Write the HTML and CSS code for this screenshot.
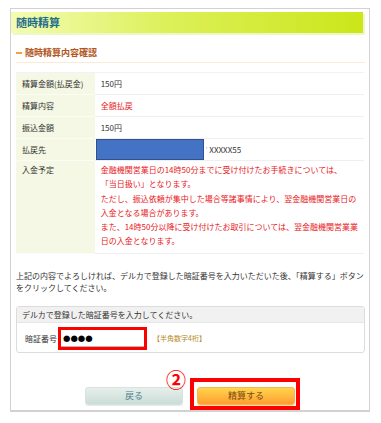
FILE: index.html
```html
<!DOCTYPE html>
<html lang="ja">
<head>
    <meta charset="UTF-8">
    <title>随時精算</title>
    <link rel="stylesheet" href="styles.css">
</head>
<body>
    <div class="panel">
        <h1 class="page-title">随時精算</h1>
        <div class="content">
            <h2 class="section-title">随時精算内容確認</h2>
            <table class="detail">
                <tr>
                    <th>精算金額(払戻金)</th>
                    <td>150円</td>
                </tr>
                <tr>
                    <th>精算内容</th>
                    <td class="red">全額払戻</td>
                </tr>
                <tr>
                    <th>振込金額</th>
                    <td>150円</td>
                </tr>
                <tr>
                    <th>払戻先</th>
                    <td>
                        <div class="dest">
                            <span class="masked"></span>
                            <span class="tick">'</span>
                            <span>XXXXX55</span>
                        </div>
                    </td>
                </tr>
                <tr class="schedule">
                    <th>入金予定</th>
                    <td class="red">
                        金融機関営業日の14時50分までに受け付けたお手続きについては、<br>
                        「当日扱い」となります。<br>
                        ただし、振込依頼が集中した場合等諸事情により、翌金融機関営業日の<br>
                        入金となる場合があります。<br>
                        また、14時50分以降に受け付けたお取引については、翌金融機関営業業<br>
                        日の入金となります。
                    </td>
                </tr>
            </table>

            <p class="note">上記の内容でよろしければ、デルカで登録した暗証番号を入力いただいた後、「精算する」ボタン<br>をクリックしてください。</p>

            <div class="pin-box">
                <div class="pin-head">デルカで登録した暗証番号を入力してください。</div>
                <div class="pin-row">
                    <label class="pin-label" for="pin">暗証番号</label>
                    <div class="pin-input">
                        <input type="text" id="pin" value="●●●●">
                    </div>
                    <span class="pin-hint">【半角数字4桁】</span>
                </div>
            </div>

            <div class="actions">
                <button type="button" class="btn btn-back">戻る</button>
                <div class="submit-wrap">
                    <span class="step">②</span>
                    <button type="submit" class="btn btn-submit">精算する</button>
                </div>
            </div>
        </div>
    </div>
</body>
</html>
```

FILE: styles.css
```css
* { box-sizing: border-box; }
body { margin: 0; padding: 8px 11px 0 10px; font-family: "Noto Sans CJK JP", sans-serif; font-size: 8px; color: #333; background: #fff; }
.panel { width: 360px; height: 404px; border: 1px solid #d2d2d2; border-bottom-width: 2px; }
.page-title { margin: 3px 0 0 0; width: 352px; height: 21px; padding-left: 5px; font-size: 11px; line-height: 21px; font-weight: bold; color: #1f6f8b; background: linear-gradient(to right, #f3fcb4, #dcf058 45%, #cbe61a); box-shadow: 2px 2px 0 #eef8c4; }
.content { padding: 0 4px 0 5px; }
.section-title { margin: 13px 0 0; padding-bottom: 2px; font-size: 9px; line-height: 14px; font-weight: bold; color: #b2571d; border-bottom: 1px solid #f9ebd6; display: flex; align-items: center; }
.section-title::before { content: ""; width: 6px; height: 2px; background: #f2a43a; margin-right: 3px; }
.detail { margin-top: 9px; width: 348px; border-collapse: collapse; border-top: 1px solid #f2f2f2; }
.detail th, .detail td { padding: 0 6px; line-height: 21px; text-align: left; font-weight: normal; vertical-align: middle; }
.detail th { width: 82px; background: #f4f8e4; border-bottom: 1px solid #fbfdf4; }
.detail td { border-bottom: 1px solid #efefef; }
.red { color: #e8201c; }
.dest { display: flex; align-items: center; height: 21px; margin-left: -5px; }
.masked { width: 108px; height: 21px; background: #4472c4; border: 1px solid #2f528f; }
.tick { color: #999; margin: 0 2px 0 2px; font-size: 6px; }
.schedule th, .schedule td { vertical-align: top; padding-top: 2px; padding-bottom: 4px; line-height: 14.3px; white-space: nowrap; }
.note { margin: 16px 0 0; line-height: 12.5px; white-space: nowrap; }
.pin-box { margin-top: 11px; border: 1px solid #dcdcdc; border-radius: 3px; height: 47px; }
.pin-head { height: 16px; line-height: 16px; padding-left: 5px; background: #f1f1f1; border-bottom: 1px solid #e6e6e6; }
.pin-row { display: flex; align-items: center; padding: 4px 0 0 8px; }
.pin-label { width: 33px; }
.pin-input { width: 89px; height: 23px; border: 3px solid #f00; }
.pin-input input { width: 100%; height: 100%; border: none; border-bottom: 1px solid #b8b8b8; padding: 0 0 0 2px; font-family: "DejaVu Sans", sans-serif; font-size: 8.5px; letter-spacing: 0; color: #000; outline: none; background: #fff; }
.pin-hint { margin-left: 6px; font-size: 7px; color: #b38a1e; }
.actions { display: flex; justify-content: center; gap: 14px; margin-top: 34px; padding-right: 1px; }
.btn { width: 98px; height: 18px; border-radius: 3px; font-family: "Noto Sans CJK JP", sans-serif; font-size: 9px; line-height: 16px; padding: 0; cursor: pointer; }
.btn-back { color: #4e7f8c; background: linear-gradient(#e6efec, #cbddd7); border: 1px solid #d6e3df; box-shadow: 0 1px 0 #e4ece9; }
.btn-submit { color: #7b4a14; background: linear-gradient(#ffd54c, #ff9d31); border: 1px solid #f7b550; box-shadow: 0 1px 0 #ffe0a8; }
.submit-wrap { position: relative; }
.submit-wrap::after { content: ""; position: absolute; top: -9px; left: -7px; right: -5px; bottom: -5px; border: 4px solid #f00; }
.step { position: absolute; left: -31px; top: -17px; font-size: 20px; line-height: 20px; font-weight: bold; color: #f00; }
```
